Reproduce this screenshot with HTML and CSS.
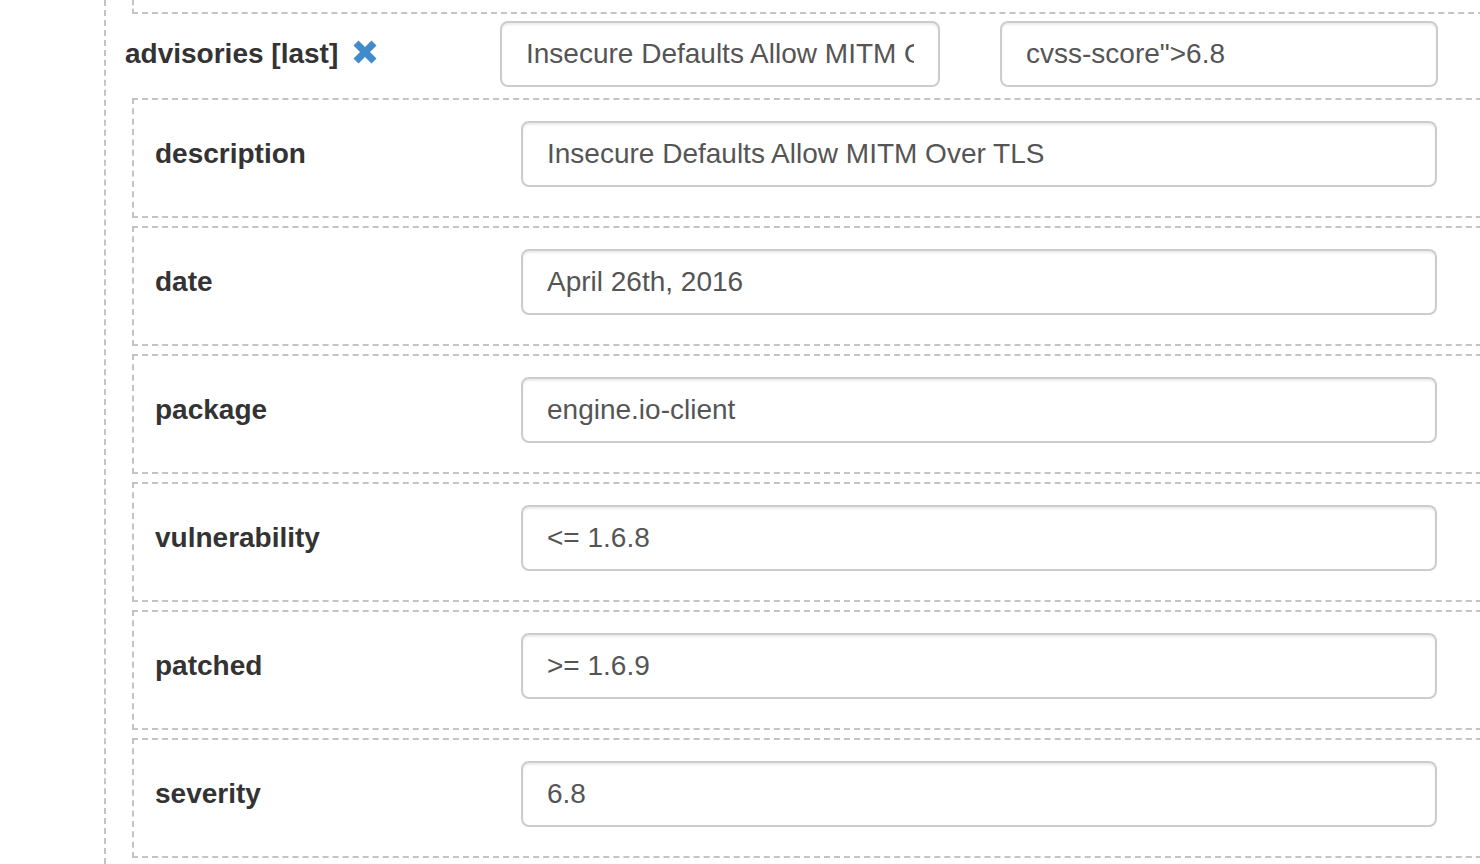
FILE: index.html
```html
<!DOCTYPE html>
<html>
<head>
<meta charset="utf-8">
<link rel="stylesheet" href="styles.css">
</head>
<body>
<div class="outer">
  <div class="prev-item"></div>
  <div class="array-head">
    <div class="head-label">
      <span>advisories [last]</span>
      <svg class="remove" viewBox="0 0 24 24" width="24" height="24" aria-hidden="true">
        <path d="M0.5 5.5 L5.5 0.5 L12 7 L18.5 0.5 L23.5 5.5 L17 12 L23.5 18.5 L18.5 23.5 L12 17 L5.5 23.5 L0.5 18.5 L7 12 Z" fill="#428bca"/>
      </svg>
    </div>
    <input class="field" type="text" value="Insecure Defaults Allow MITM Over TLS">
    <input class="field second" type="text" value="cvss-score&quot;&gt;6.8">
  </div>
  <div class="nested">
    <div class="row"><label class="lbl">description</label><input class="field" type="text" value="Insecure Defaults Allow MITM Over TLS"></div>
    <div class="row"><label class="lbl">date</label><input class="field" type="text" value="April 26th, 2016"></div>
    <div class="row"><label class="lbl">package</label><input class="field" type="text" value="engine.io-client"></div>
    <div class="row"><label class="lbl">vulnerability</label><input class="field" type="text" value="&lt;= 1.6.8"></div>
    <div class="row"><label class="lbl">patched</label><input class="field" type="text" value="&gt;= 1.6.9"></div>
    <div class="row"><label class="lbl">severity</label><input class="field" type="text" value="6.8"></div>
  </div>
</div>
</body>
</html>
```

FILE: styles.css
```css
html, body {
  margin: 0;
  padding: 0;
  background: #fff;
  overflow: hidden;
  width: 1480px;
  height: 864px;
}

body {
  font-family: "Liberation Sans", Arial, sans-serif;
  color: #333;
}

.outer {
  margin-left: 104px;
  border-left: 2px dashed #c4c4c4;
  padding-left: 26px;
  width: 1376px;
  height: 864px;
  box-sizing: border-box;
  overflow: hidden;
}

.prev-item {
  width: 1400px;
  height: 12px;
  border-left: 2px dashed #c4c4c4;
  border-bottom: 2px dashed #c4c4c4;
}

.array-head {
  display: grid;
  grid-template-columns: 375px 440px 498px;
  margin-top: 7px;
  margin-left: -7px;
  margin-bottom: 11px;
}

.head-label {
  display: flex;
  align-items: center;
  gap: 15px;
  font-size: 28px;
  font-weight: bold;
  line-height: 40px;
  padding-top: 13px;
  align-self: start;
}

.head-label .remove {
  display: block;
  margin-top: -4px;
}

.field {
  display: block;
  box-sizing: border-box;
  height: 66px;
  width: 100%;
  margin: 0;
  padding: 11px 24px;
  border: 2px solid #ccc;
  border-radius: 8px;
  box-shadow: inset 0 2px 2px rgba(0, 0, 0, 0.075);
  font-family: "Liberation Sans", Arial, sans-serif;
  font-size: 28px;
  line-height: 40px;
  color: #555;
  background: #fff;
  outline: none;
}

.field.second {
  margin-left: 60px;
  width: 438px;
}

.nested {
  display: flex;
  flex-direction: column;
  gap: 8px;
  width: 1400px;
}

.row {
  display: grid;
  grid-template-columns: 366px 916px;
  border: 2px dashed #c4c4c4;
  padding: 21px 60px 29px 21px;
}

.lbl {
  display: block;
  font-size: 28px;
  font-weight: bold;
  line-height: 40px;
  padding-top: 13px;
  color: #333;
}
```
